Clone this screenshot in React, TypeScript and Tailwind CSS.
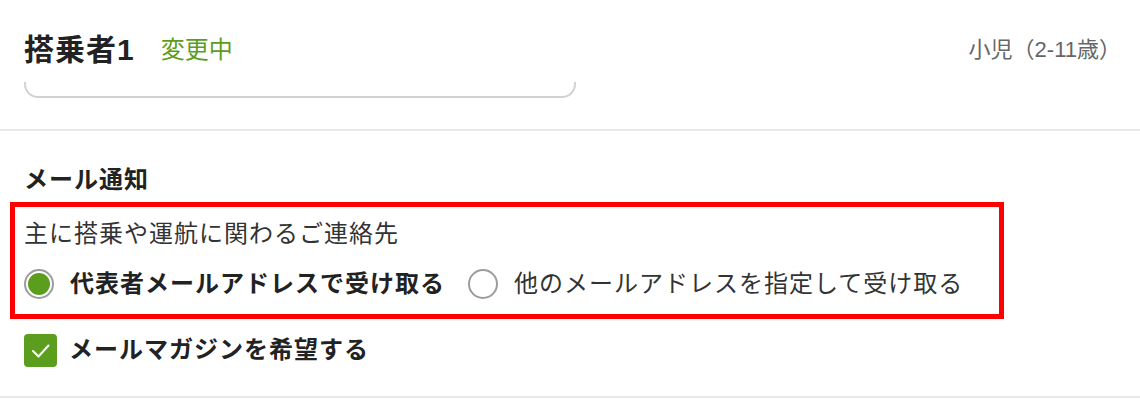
import React from 'react';

const GREEN = '#5b9e1e';

function Radio({ checked }: { checked: boolean }) {
  return (
    <span className="flex h-[30px] w-[30px] shrink-0 items-center justify-center rounded-full border-2 border-[#9c9c9c] p-[2px]">
      {checked && <span className="h-full w-full rounded-full bg-[#5b9e1e]" />}
    </span>
  );
}

function Checkbox() {
  return (
    <span className="flex h-[33px] w-[33px] shrink-0 items-center justify-center rounded-[4px] bg-[#5b9e1e]">
      <svg width="33" height="33" viewBox="0 0 33 33" fill="none">
        <polyline points="9,17 14.5,22.5 24.5,11.5" stroke="#fff" strokeWidth="2" strokeLinecap="round" strokeLinejoin="round" />
      </svg>
    </span>
  );
}

export default function App(): React.ReactNode {
  return (
    <div
      className="flex h-[400px] w-[1140px] flex-col overflow-hidden bg-white text-[#333]"
      style={{ fontFamily: '"Liberation Sans", "Noto Sans CJK JP", sans-serif' }}
    >
      {/* passenger header */}
      <div className="h-[129px] shrink-0 pl-6 pr-[19px] pt-[30px]">
        <div className="flex h-10 items-center justify-between">
          <div className="flex items-center">
            <span className="text-[30px] font-bold leading-10 tracking-[1px] text-[#222]">搭乗者1</span>
            <span className="ml-[26px] text-[24px] leading-10" style={{ color: GREEN }}>
              変更中
            </span>
          </div>
          <span className="text-[22px] leading-10 text-[#666]">小児（2-11歳）</span>
        </div>
        <div className="mt-3 h-4 w-[552px] rounded-b-[14px] border-x-2 border-b-2 border-[#d2d2d2]" />
      </div>
      <div className="h-[2px] shrink-0 bg-[#e8e8e8]" />

      {/* mail notification */}
      <div className="h-[265px] shrink-0 px-6 pt-[33px]">
        <h3 className="h-8 text-[24px] font-bold leading-8 tracking-[1px] text-[#222]">メール通知</h3>

        <div className="-ml-[14px] mt-[6px] w-[994px] border-[5px] border-[#ff0000] pb-[14px] pl-[9px] pt-[11px]">
          <p className="h-8 text-[24px] leading-8 tracking-[1px] text-[#333]">主に搭乗や運航に関わるご連絡先</p>
          <div className="mt-[18px] flex h-8 items-center">
            <label className="flex items-center gap-4">
              <Radio checked />
              <span className="text-[24px] font-bold leading-8 tracking-[1px] text-[#222]">代表者メールアドレスで受け取る</span>
            </label>
            <label className="ml-[23px] flex items-center gap-4">
              <Radio checked={false} />
              <span className="text-[24px] leading-8 tracking-[1px] text-[#333]">他のメールアドレスを指定して受け取る</span>
            </label>
          </div>
        </div>

        <label className="mt-[14px] flex h-[34px] items-center gap-3">
          <Checkbox />
          <span className="text-[24px] font-bold leading-8 tracking-[1px] text-[#222]">メールマガジンを希望する</span>
        </label>
      </div>
      <div className="h-[2px] shrink-0 bg-[#e8e8e8]" />
    </div>
  );
}
